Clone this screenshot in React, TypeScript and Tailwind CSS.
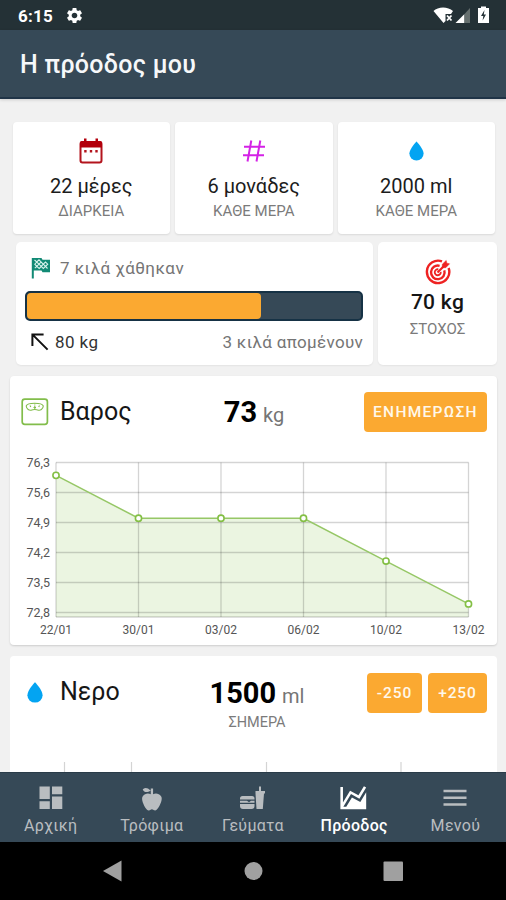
import type { ReactNode } from "react"

interface Point {
  date: string
  kg: number
}

const WEIGHTS: Point[] = [
  { date: "22/01", kg: 76 },
  { date: "30/01", kg: 75 },
  { date: "03/02", kg: 75 },
  { date: "06/02", kg: 75 },
  { date: "10/02", kg: 74 },
  { date: "13/02", kg: 73 },
]

const Y_TICKS = [76.3, 75.6, 74.9, 74.2, 73.5, 72.8]

function Drop({ className }: { className?: string }) {
  return (
    <svg viewBox="0 0 16 21" className={className} fill="#03a4f2">
      <path d="M8 0.3C8 0.3 15.6 8.2 15.6 13.2A7.6 7.4 0 0 1 0.4 13.2C0.4 8.2 8 0.3 8 0.3Z" />
    </svg>
  )
}

function StatusBar() {
  return (
    <div className="flex h-[30px] shrink-0 items-center bg-[#243136] pl-[18px] pr-[16px] text-white">
      <span className="text-[17px] font-bold leading-[30px] tracking-[0.2px] pt-[2px]">6:15</span>
      <svg viewBox="0 0 24 24" className="ml-[12px] h-[19px] w-[19px]" fill="#fff">
        <path d="M19.14 12.94c.04-.3.06-.61.06-.94 0-.32-.02-.64-.07-.94l2.03-1.58c.18-.14.23-.41.12-.61l-1.92-3.32c-.12-.22-.37-.29-.59-.22l-2.39.96c-.5-.38-1.03-.7-1.62-.94l-.36-2.54c-.04-.24-.24-.41-.48-.41h-3.84c-.24 0-.43.17-.47.41l-.36 2.54c-.59.24-1.13.57-1.62.94l-2.39-.96c-.22-.08-.47 0-.59.22L2.74 8.87c-.12.21-.08.47.12.61l2.03 1.58c-.05.3-.09.63-.09.94s.02.64.07.94l-2.03 1.58c-.18.14-.23.41-.12.61l1.92 3.32c.12.22.37.29.59.22l2.39-.96c.5.38 1.03.7 1.62.94l.36 2.54c.05.24.24.41.48.41h3.84c.24 0 .44-.17.47-.41l.36-2.54c.59-.24 1.13-.56 1.62-.94l2.39.96c.22.08.47 0 .59-.22l1.92-3.32c.12-.22.07-.47-.12-.61l-2.01-1.58zM12 15.6c-1.98 0-3.6-1.62-3.6-3.6s1.62-3.6 3.6-3.6 3.6 1.62 3.6 3.6-1.62 3.6-3.6 3.6z" />
      </svg>
      <svg viewBox="0 0 57 18" className="ml-auto h-[18px] w-[57px]">
        {/* wifi */}
        <path d="M0.5 5C5 0.2 15 0.2 20 5L18 8H12.5V15L10.5 17Z" fill="#fff" />
        <path d="M14 9.5L18.5 14.5M18.5 9.5L14 14.5" stroke="#fff" strokeWidth="1.8" />
        {/* signal */}
        <path d="M22.5 17L31.5 8V17Z" fill="#fff" />
        <path d="M31.5 8L37 2V17H31.5Z" fill="#66706f" />
        {/* battery */}
        <path d="M48 2V0.5H53V2H56V17H45V2Z" fill="#fff" />
        <path d="M51.5 4L48 10H50.3L49.6 14.5L53 8.5H50.8Z" fill="#243136" />
      </svg>
    </div>
  )
}

function StatCard({ icon, value, label }: { icon: ReactNode; value: string; label: string }) {
  return (
    <div className="flex h-[112px] flex-1 flex-col items-center rounded-[4px] bg-white pt-[15px] shadow-[0_1px_2px_rgba(0,0,0,0.1)]">
      <div className="flex h-[28px] items-center justify-center">{icon}</div>
      <div className="mt-[9px] text-[20px] leading-[24px] text-[#1c1c1c]">{value}</div>
      <div className="mt-[3px] text-[15px] leading-[20px] text-[#7b7b7b]">{label}</div>
    </div>
  )
}

function CalendarIcon() {
  return (
    <svg viewBox="0 0 24 26" className="h-[26px] w-[24px]">
      <rect x="1.5" y="4" width="21" height="20.6" rx="2" fill="none" stroke="#b3141d" strokeWidth="2" />
      <path d="M1 9.5V5a2 2 0 0 1 2-2H21a2 2 0 0 1 2 2V9.5Z" fill="#b3000c" />
      <path d="M5 0.5H7.5V4H5ZM16.5 0.5H19V4H16.5Z" fill="#b3000c" />
      <path d="M5.2 12H7.6V14.4H5.2ZM10.8 12H13.2V14.4H10.8ZM16.3 12H18.7V14.4H16.3Z" fill="#b3141d" />
    </svg>
  )
}

function HashIcon() {
  return (
    <svg viewBox="0 0 24 24" className="h-[24px] w-[24px]" fill="none" stroke="#d422e6" strokeWidth="2">
      <path d="M9.3 1.5L5.5 22.5M18.3 1.5L14.5 22.5M2 7.7H23M1 16.3H22" />
    </svg>
  )
}

function FlagIcon() {
  return (
    <svg viewBox="0 0 20 22" className="h-[22px] w-[20px]">
      <path d="M0.8 1H10.5L11.5 2.8H19V15.3H11.5L10.5 13.4H2.8V21.5H0.8Z" fill="#128a75" />
      <path
        d="M3.5 3L5.8 5L8 2.8L10 5L8 7.2L5.8 5L3.8 7.2L5.8 9.4L3.8 11.2M5.8 9.4L8 7.2L10.2 9.4L8.2 11.5L5.8 9.4M10.2 9.4L12.3 7.2L10 5M12.3 7.2L14.5 5L16.7 7.2L14.5 9.4L12.3 7.2M14.5 9.4L16.5 11.5M10.2 9.4L12.3 11.5L14.5 9.4"
        fill="none"
        stroke="#d8f2ec"
        strokeWidth="1.1"
      />
    </svg>
  )
}

function TargetIcon() {
  return (
    <svg viewBox="0 0 26 26" className="h-[26px] w-[26px]" fill="none" stroke="#ee2222">
      <path d="M17 2.4A11.2 11.2 0 1 0 23.6 9" strokeWidth="2.4" />
      <path d="M14.6 6.8A6.8 6.8 0 1 0 19.3 11.3" strokeWidth="2.4" />
      <path d="M12.5 13.5L20 6" strokeWidth="2.2" />
      <path d="M17.3 8.7L17.3 5.2L21.2 1.4L21.8 4.2L24.6 4.8L20.8 8.7Z" fill="#ee2222" strokeWidth="0.5" />
      <path d="M13.3 10.3A3 3 0 1 0 15.7 12.8" strokeWidth="1.8" />
    </svg>
  )
}

function ScaleIcon() {
  return (
    <svg viewBox="0 0 28 28" className="h-[28px] w-[28px]" fill="none" stroke="#82bd4b">
      <rect x="1.2" y="1.2" width="25.2" height="25.2" rx="2.6" strokeWidth="1.7" />
      <path d="M5.2 8C6.5 4.3 20.8 4.3 22.3 8C22 11.5 19 12.6 17.5 12.2C15 11.2 12.5 11.2 10 12.2C8.5 12.6 5.5 11.5 5.2 8Z" strokeWidth="1.1" />
      <path d="M13.8 11.5V7.5M12.5 9.5H15M9 7.5L9.8 9M18.5 7.5L17.7 9M13.8 5.4V6.6" strokeWidth="1.1" />
    </svg>
  )
}

function Progress() {
  return (
    <div className="flex h-[123px] w-[357px] flex-col rounded-[5px] bg-white pl-[9px] pr-[10px] pt-[14px] shadow-[0_1px_2px_rgba(0,0,0,0.06)]">
      <div className="flex h-[24px] items-center pl-[6px]">
        <FlagIcon />
        <span className="ml-[9px] text-[17px] leading-[24px] tracking-[0.45px] text-[#757575]">7 κιλά χάθηκαν</span>
      </div>
      <div className="mt-[11px] h-[30px] rounded-[5px] border-2 border-[#163245] bg-[#364957]">
        <div className="h-full rounded-[4px] bg-[#fba931]" style={{ width: `${(7 / 10) * 100}%` }} />
      </div>
      <div className="mt-[9px] flex h-[24px] items-center pl-[6px] text-[17px] leading-[24px]">
        <svg viewBox="0 0 18 18" className="h-[18px] w-[18px]" fill="none" stroke="#111" strokeWidth="2">
          <path d="M1.4 13V1.4H12.6M1.6 1.6L16.6 16.6" />
        </svg>
        <span className="ml-[6px] tracking-[0.4px] text-[#333]">80 kg</span>
        <span className="ml-auto tracking-[0.3px] text-[#757575]">3 κιλά απομένουν</span>
      </div>
    </div>
  )
}

function WeightChart() {
  // plot area in svg units, one unit per css pixel
  const left = 46
  const right = 458.5
  const top = 8.5
  const bottom = 163
  const step = (right - left) / (WEIGHTS.length - 1)
  const y = (kg: number) => top + (76.3 - kg) * (150 / 3.5)
  const x = (i: number) => left + i * step
  const line = WEIGHTS.map((p, i) => `${x(i)},${y(p.kg)}`).join(" ")

  return (
    <svg viewBox="0 0 487 190" className="h-[190px] w-[487px]">
      <polygon points={`${left},${bottom} ${line} ${right},${bottom}`} fill="#ebf5e1" />
      <g stroke="#000" strokeOpacity="0.17" strokeWidth="1.3">
        {Y_TICKS.map((t) => (
          <line key={t} x1={left} x2={right} y1={y(t)} y2={y(t)} />
        ))}
        {WEIGHTS.map((p, i) => (
          <line key={p.date} x1={x(i)} x2={x(i)} y1={top} y2={bottom} />
        ))}
        <line x1={left} x2={right} y1={bottom} y2={bottom} />
      </g>
      <polyline points={line} fill="none" stroke="#96c766" strokeWidth="1.5" />
      {WEIGHTS.map((p, i) => (
        <circle key={p.date} cx={x(i)} cy={y(p.kg)} r="3.1" fill="#fff" stroke="#83bf44" strokeWidth="1.6" />
      ))}
      <g fill="#555" fontSize="12.5">
        {Y_TICKS.map((t) => (
          <text key={t} x="40" y={y(t) + 4.5} textAnchor="end">
            {t.toFixed(1).replace(".", ",")}
          </text>
        ))}
        {WEIGHTS.map((p, i) => (
          <text key={p.date} x={x(i)} y="179.5" textAnchor="middle" fontSize="12">
            {p.date}
          </text>
        ))}
      </g>
    </svg>
  )
}

function ActionButton({ children, className }: { children: ReactNode; className: string }) {
  return (
    <button
      type="button"
      className={`flex h-[40px] items-center justify-center rounded-[4px] bg-[#fba931] pt-px text-[15.5px] font-medium text-[#fff8ea] ${className}`}
    >
      {children}
    </button>
  )
}

function NavItem({ icon, label, active }: { icon: ReactNode; label: string; active?: boolean }) {
  return (
    <div className={`flex flex-1 flex-col items-center pt-[11px] ${active ? "text-white" : "text-[#b9bdc0]"}`}>
      <svg viewBox="0 0 28 28" className="h-[28px] w-[28px]" fill="currentColor">
        {icon}
      </svg>
      <span className={`mt-[4px] text-[16px] leading-[20px] tracking-[0.3px] ${active ? "font-medium" : ""}`}>{label}</span>
    </div>
  )
}

export default function App() {
  return (
    <div className="flex h-[900px] w-[506px] flex-col overflow-hidden bg-[#f1f1f1] font-['Roboto','Noto_Sans',sans-serif]">
      <StatusBar />
      <header className="flex h-[69px] shrink-0 items-center border-b-2 border-[#203447] bg-[#364957] pl-[20px] pt-[3px] shadow-[0_1px_3px_rgba(0,0,0,0.15)]">
        <h1 className="text-[25px] font-medium tracking-[0.3px] text-[#f6f8fa]">Η πρόοδος μου</h1>
      </header>

      <main className="flex min-h-0 flex-1 flex-col overflow-hidden pt-[23px]">
        <section className="flex gap-[5px] pl-[12.5px] pr-[11px]">
          <StatCard icon={<CalendarIcon />} value="22 μέρες" label="ΔΙΑΡΚΕΙΑ" />
          <StatCard icon={<HashIcon />} value="6 μονάδες" label="ΚΑΘΕ ΜΕΡΑ" />
          <StatCard icon={<Drop className="h-[20px] w-[15px]" />} value="2000 ml" label="ΚΑΘΕ ΜΕΡΑ" />
        </section>

        <section className="mt-[8px] flex gap-[5px] pl-[16px]">
          <Progress />
          <div className="flex h-[123px] w-[119px] flex-col items-center rounded-[5px] bg-white pt-[17px] shadow-[0_1px_2px_rgba(0,0,0,0.06)]">
            <TargetIcon />
            <div className="mt-[4px] text-[21px] font-medium leading-[26px] tracking-[0.3px] text-[#151515]">70 kg</div>
            <div className="mt-[4px] text-[15px] leading-[20px] text-[#7b7b7b]">ΣΤΟΧΟΣ</div>
          </div>
        </section>

        <section className="ml-[10px] mt-[11px] h-[269px] w-[487px] shrink-0 rounded-[4px] bg-white shadow-[0_1px_2px_rgba(0,0,0,0.15)]">
          <div className="grid h-[78px] grid-cols-3 pl-[11px] pr-[10px] pt-[16px]">
            <div className="flex h-[40px] items-center">
              <ScaleIcon />
              <span className="ml-[11px] text-[25px] leading-[38px] text-[#161616]">Βαρος</span>
            </div>
            <div className="flex h-[40px] items-baseline justify-center leading-[40px]">
              <span className="text-[29px] font-bold text-black">73</span>
              <span className="ml-[6px] text-[20px] text-[#757575]">kg</span>
            </div>
            <ActionButton className="w-[123px] justify-self-end tracking-[1.3px]">ΕΝΗΜΕΡΩΣΗ</ActionButton>
          </div>
          <WeightChart />
        </section>

        <section className="ml-[10px] mt-[11px] h-[160px] w-[487px] shrink-0 rounded-[4px] bg-white">
          <div className="grid h-[105px] grid-cols-3 pl-[17px] pr-[10px] pt-[17px]">
            <div className="flex h-[38px] items-center">
              <Drop className="h-[21px] w-[16px]" />
              <span className="ml-[17px] text-[25px] leading-[38px] text-[#161616]">Νερο</span>
            </div>
            <div className="flex flex-col items-center">
              <div className="flex h-[40px] items-baseline leading-[40px]">
                <span className="text-[29px] font-bold text-black">1500</span>
                <span className="ml-[6px] text-[20px] text-[#757575]">ml</span>
              </div>
              <div className="text-[14.5px] leading-[20px] text-[#7b7b7b]">ΣΗΜΕΡΑ</div>
            </div>
            <div className="flex justify-end gap-[6px]">
              <ActionButton className="w-[55px] tracking-[0.9px]">-250</ActionButton>
              <ActionButton className="w-[59px] tracking-[0.9px]">+250</ActionButton>
            </div>
          </div>
          <svg viewBox="0 0 487 55" className="h-[55px] w-[487px]" stroke="#d4d4d4" strokeWidth="1.2">
            <path d="M54.5 1V55M121.5 1V55M256.5 1V55M391 1V55" />
          </svg>
        </section>
      </main>

      <nav className="flex h-[70px] shrink-0 border-t border-[#2a3c49] bg-[#364957]">
        <NavItem
          label="Αρχική"
          icon={<path d="M2.5 2.5H12.8V15H2.5ZM15 2.5H25.3V10.3H15ZM2.5 17.3H12.8V25H2.5ZM15 12.5H25.3V25H15Z" />}
        />
        <NavItem
          label="Τρόφιμα"
          icon={
            <path
              transform="translate(0 1) scale(1.16)"
              d="M20,10C22,13 17,22 15,22C13,22 13,21 12,21C11,21 11,22 9,22C7,22 2,13 4,10C6,7 9,7 11,8V5C5.38,8.07 4.11,3.78 4.11,3.78C4.11,3.78 6.77,0.19 11,5V3H13V8C15,7 18,7 20,10Z"
            />
          }
        />
        <NavItem
          label="Γεύματα"
          icon={
            <>
              <path d="M3.5 12H13A2.5 2.5 0 0 1 15.5 14.5V15.6H1V14.5A2.5 2.5 0 0 1 3.5 12ZM1 16.8H8L10 18.3L12 16.8H15.5V18.8H1ZM1 20H15.5V22A3 3 0 0 1 12.5 25H4A3 3 0 0 1 1 22Z" />
              <path d="M16.5 7H20V2.5H22V7H26V9.5H25L23.8 25H17.5L16.5 9.5Z" />
            </>
          }
        />
        <NavItem
          active
          label="Πρόοδος"
          icon={
            <path
              transform="translate(-2.2 -0.8) scale(1.29 1.24)"
              d="M17.45,15.18L22,7.31V19L22,21H2V3H4V15.54L9.5,6L16,9.78L20.24,2.45L21.97,3.45L16.74,12.5L10.23,8.75L4.31,19H6.57L10.96,11.44L17.45,15.18Z"
            />
          }
        />
        <NavItem label="Μενού" icon={<path d="M2.5 5.8H25.5V8.2H2.5ZM2.5 12.5H25.5V14.9H2.5ZM2.5 19.3H25.5V21.7H2.5Z" />} />
      </nav>

      <div className="flex h-[58px] shrink-0 items-center bg-black">
        <svg viewBox="0 0 506 58" className="h-[58px] w-[506px]" fill="#a0a0a0">
          <path d="M103 29L121.5 18.5V39.5Z" />
          <circle cx="253.5" cy="29" r="9" />
          <rect x="383.5" y="19.5" width="19.5" height="19.5" rx="1" />
        </svg>
      </div>
    </div>
  )
}
